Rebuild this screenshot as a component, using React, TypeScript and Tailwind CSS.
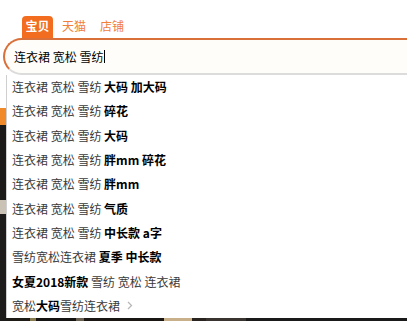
import React from "react";

const F = { fontFamily: '"Noto Sans CJK SC", "Noto Sans", sans-serif' };

type Seg = { t: string; b?: boolean };
const rows: Seg[][] = [
  [{ t: "连衣裙 宽松 雪纺 " }, { t: "大码 加大码", b: true }],
  [{ t: "连衣裙 宽松 雪纺 " }, { t: "碎花", b: true }],
  [{ t: "连衣裙 宽松 雪纺 " }, { t: "大码", b: true }],
  [{ t: "连衣裙 宽松 雪纺 " }, { t: "胖mm 碎花", b: true }],
  [{ t: "连衣裙 宽松 雪纺 " }, { t: "胖mm", b: true }],
  [{ t: "连衣裙 宽松 雪纺 " }, { t: "气质", b: true }],
  [{ t: "连衣裙 宽松 雪纺 " }, { t: "中长款 a字", b: true }],
  [{ t: "雪纺宽松连衣裙 " }, { t: "夏季 中长款", b: true }],
  [{ t: "女夏2018新款", b: true }, { t: " 雪纺 宽松 连衣裙" }],
];

export default function App() {
  return (
    <div className="w-[407px] h-[321px] bg-white overflow-hidden flex flex-col" style={F}>
      <div className="h-[16px] shrink-0" />
      <div className="h-[22px] shrink-0 flex items-end pl-[22px] text-[12px] leading-none">
        <div className="w-[31px] h-[22px] bg-[#f26d1f] rounded-t-[4px] text-white font-bold flex items-center justify-center pb-[2px]">
          宝贝
        </div>
        <div className="ml-[9px] h-[22px] flex items-center pb-[2px] text-[#f0803c]">天猫</div>
        <div className="ml-[14px] h-[22px] flex items-center pb-[2px] text-[#f0803c]">店铺</div>
      </div>
      <div className="ml-[3px] h-[37px] shrink-0 border-t-2 border-l-2 border-b-2 border-[#d9703a] border-b-[#dcdcdc] rounded-l-[19px] bg-[#fffdf9] flex items-center pl-[9px] text-[12px] text-black">
        <span>连衣裙 宽松 雪纺</span>
        <span className="ml-[1px] w-px h-[13px] bg-black" />
      </div>
      <div className="flex flex-1 min-h-0">
        <div className="w-[6px] shrink-0 flex flex-col">
          <div className="h-[33px] bg-white" />
          <div className="h-[17px] bg-[#f08a2a]" />
          <div className="h-[75px] bg-[#1c1a18]" />
          <div className="h-[14px] bg-[#c9c2b5]" />
          <div className="flex-1 bg-[#1e1c1a]" />
        </div>
        <div className="flex-1 flex flex-col">
          <div className="flex-1 border-l border-[#cfcfcf] bg-white flex flex-col pl-[5px] text-[12px]">
            {rows.map((r, i) => (
              <div key={i} className="h-[24.3px] flex items-center whitespace-pre">
                {r.map((s, j) => (
                  <span key={j} className={s.b ? "font-bold text-black" : "text-[#3a3a3a]"}>
                    {s.t}
                  </span>
                ))}
              </div>
            ))}
            <div className="h-[24.3px] flex items-center whitespace-pre">
              <span className="text-[#3a3a3a]">宽松</span>
              <span className="font-bold text-black">大码</span>
              <span className="text-[#3a3a3a]">雪纺连衣裙</span>
              <svg width="6" height="9" viewBox="0 0 6 9" className="ml-[7px]">
                <path d="M1 1 L4.5 4.5 L1 8" stroke="#b8b8b8" strokeWidth="1.3" fill="none" />
              </svg>
            </div>
          </div>
          <div className="h-[5px] shrink-0 flex">
            <div className="w-[24px] bg-[#1e1a16]" />
            <div className="w-[6px] bg-[#8a7a50]" />
            <div className="w-[40px] bg-[#161412]" />
            <div className="w-[8px] bg-[#6a6050]" />
            <div className="w-[80px] bg-[#1a1614]" />
            <div className="w-[28px] bg-[#c8b08a]" />
            <div className="w-[14px] bg-[#2a2420]" />
            <div className="w-[40px] bg-[#3a3430]" />
            <div className="flex-1 bg-[#1a1a1a]" />
          </div>
        </div>
      </div>
    </div>
  );
}
